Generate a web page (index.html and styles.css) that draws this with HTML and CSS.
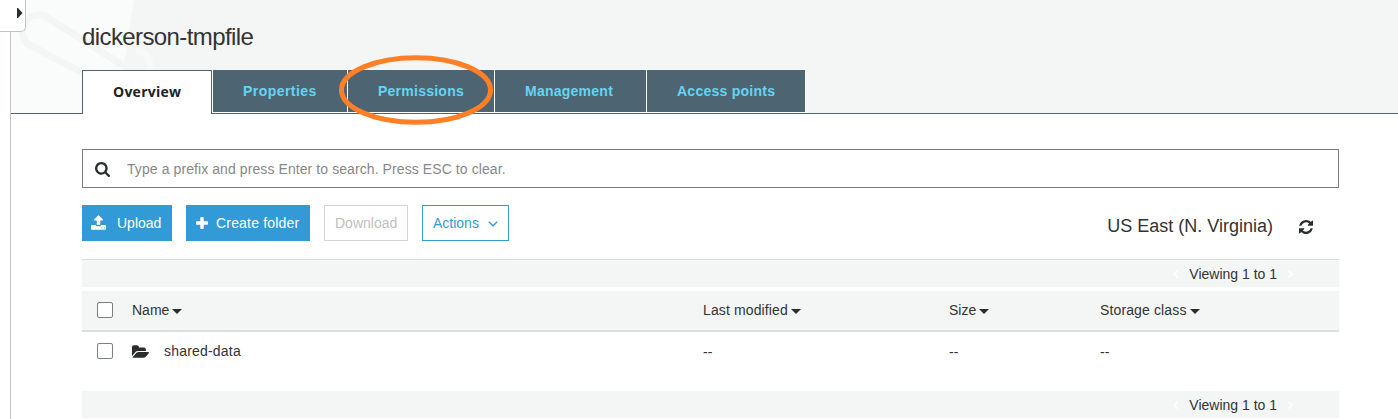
FILE: index.html
```html
<!DOCTYPE html>
<html lang="en">
<head>
<meta charset="utf-8">
<title>dickerson-tmpfile</title>
<link rel="stylesheet" href="styles.css">
</head>
<body>
<div class="app">
  <div class="rail"></div>
  <button class="rail-toggle" aria-label="Open sidebar"><svg width="6" height="10" viewBox="0 0 6 10"><path d="M0 0H1L5.500 5L1 10H0Z"/></svg></button>
  <main class="page">
    <header class="header">
      <svg class="watermark" width="150" height="113" viewBox="0 0 150 113">
        <path class="wm-fill" d="M0 0H123L112 70H71V113H0Z"/>
        <path class="wm-line" d="M76 75L17 44C5 34 13 10 34 16L108 63C120 71 129 64 125 53"/>
        <path class="wm-line" d="M125 52C134 50 141 60 138 70"/>
      </svg>
      <h1 class="title">dickerson-tmpfile</h1>
      <nav class="tabs">
        <a class="tab tab-overview active"><span>Overview</span></a>
        <a class="tab tab-properties"><span>Properties</span></a>
        <a class="tab tab-permissions"><span>Permissions</span>
          <svg class="ring" width="158" height="74" viewBox="0 0 158 74"><ellipse cx="79" cy="37" rx="74.5" ry="32.3"/></svg>
        </a>
        <a class="tab tab-management"><span>Management</span></a>
        <a class="tab tab-access"><span>Access points</span></a>
      </nav>
    </header>
    <section class="content">
      <div class="search">
        <svg width="15" height="15" viewBox="0 128 1664 1664"><path d="M1152 832q0-185-131.500-316.500t-316.500-131.500-316.500 131.500-131.500 316.500 131.500 316.500 316.500 131.500 316.500-131.500 131.500-316.500zm512 832q0 52-38 90t-90 38q-54 0-90-38l-343-342q-179 124-399 124-143 0-273.500-55.500t-225-150-150-225-55.500-273.500 55.500-273.500 150-225 225-150 273.500-55.500 273.500 55.500 225 150 150 225 55.500 273.500q0 220-124 399l343 343q37 37 37 90z"/></svg>
        <span class="placeholder">Type a prefix and press Enter to search. Press ESC to clear.</span>
      </div>
      <div class="toolbar">
        <button class="btn primary upload"><svg width="15" height="15" viewBox="0 64 1664 1600"><path d="M1280 1472q0-26-19-45t-45-19-45 19-19 45 19 45 45 19 45-19 19-45zm256 0q0-26-19-45t-45-19-45 19-19 45 19 45 45 19 45-19 19-45zm128-224v320q0 40-28 68t-68 28h-1472q-40 0-68-28t-28-68v-320q0-40 28-68t68-28h427q21 56 70.500 92t110.500 36h256q61 0 110.500-36t70.500-92h427q40 0 68 28t28 68zm-325-648q-17 40-59 40h-256v448q0 26-19 45t-45 19h-256q-26 0-45-19t-19-45v-448h-256q-42 0-59-40-17-39 14-69l448-448q18-19 45-19t45 19l448 448q31 30 14 69z"/></svg><span>Upload</span></button>
        <button class="btn primary create"><svg width="12" height="12" viewBox="0 0 12 12"><path d="M5 0H7Q7.700 0 7.700 .7V4.300H11.300Q12 4.300 12 5V7Q12 7.700 11.300 7.700H7.700V11.300Q7.700 12 7 12H5Q4.300 12 4.300 11.300V7.700H.7Q0 7.700 0 7V5Q0 4.300 .7 4.300H4.300V.7Q4.300 0 5 0Z"/></svg><span>Create folder</span></button>
        <button class="btn disabled">Download</button>
        <button class="btn outline"><span>Actions</span><svg width="10" height="6" viewBox="0 0 10 6"><path d="M.8 .8L5 4.700L9.200 .8"/></svg></button>
        <div class="region"><span>US East (N. Virginia)</span><svg width="14" height="14" viewBox="0 128 1536 1536"><path d="M1511 1056q0 5-1 7-64 268-268 434.500t-478 166.500q-146 0-282.500-55t-243.500-157l-129 129q-19 19-45 19t-45-19-19-45v-448q0-26 19-45t45-19h448q26 0 45 19t19 45-19 45l-137 137q71 66 161 102t187 36q134 0 250-65t186-179q11-17 53-117 8-23 30-23h192q13 0 22.500 9.500t9.500 22.500zm25-800v448q0 26-19 45t-45 19h-448q-26 0-45-19t-19-45 19-45l138-138q-148-137-349-137-134 0-250 65t-186 179q-11 17-53 117-8 23-30 23h-199q-13 0-22.500-9.500t-9.500-22.500v-7q65-268 270-434.500t480-166.500q146 0 284 55.500t245 156.500l130-129q19-19 45-19t45 19 19 45z"/></svg></div>
      </div>
      <div class="pager top"><svg width="5" height="8" viewBox="0 0 5 8"><path d="M4.500 .5L1 4L4.500 7.500"/></svg><span>Viewing 1 to 1</span><svg width="5" height="8" viewBox="0 0 5 8"><path d="M.5 .5L4 4L.5 7.500"/></svg></div>
      <div class="row head">
        <i class="check"></i>
        <div class="sort"><span>Name</span><i class="caret"></i></div>
        <div class="sort modified"><span>Last modified</span><i class="caret"></i></div>
        <div class="sort"><span>Size</span><i class="caret"></i></div>
        <div class="sort storage"><span>Storage class</span><i class="caret"></i></div>
      </div>
      <div class="row item">
        <i class="check"></i>
        <div class="name"><svg width="17" height="13" viewBox="0 256 1879 1408"><path d="M1879 1080q0 31-31 66l-336 396q-43 51-120.500 86.500t-143.500 35.500h-1088q-34 0-60.500-13t-26.500-43q0-31 31-66l336-396q43-51 120.500-86.500t143.500-35.500h1088q34 0 60.500 13t26.500 43zm-343-344v160h-832q-94 0-197 47.500t-164 119.500l-337 396-5 6q0-4-.5-12.500t-.5-12.500v-960q0-92 66-158t158-66h320q92 0 158 66t66 158v32h544q92 0 158 66t66 158z"/></svg><span>shared-data</span></div>
        <span class="dash">--</span><span class="dash">--</span><span class="dash">--</span>
      </div>
      <div class="pager"><svg width="5" height="8" viewBox="0 0 5 8"><path d="M4.500 .5L1 4L4.500 7.500"/></svg><span>Viewing 1 to 1</span><svg width="5" height="8" viewBox="0 0 5 8"><path d="M.5 .5L4 4L.5 7.500"/></svg></div>
    </section>
  </main>
</div>
</body>
</html>
```
FILE: styles.css
```css
* { box-sizing: border-box; }
body { margin: 0; background: #fff; color: #333; font: 14px/20px "Liberation Sans", Arial, sans-serif; overflow: hidden; }
svg { display: block; flex: none; fill: #2a2d2d; }
.app { display: flex; height: 419px; position: relative; }
.rail { width: 11px; flex: none; border-right: 1px solid #c4c4c4; }
.rail-toggle { position: absolute; left: 0; top: 0; z-index: 2; width: 26px; height: 32px; margin: 0; padding: 8px 0 0 17px; background: #fff; border: solid #c4c4c4; border-width: 0 1px 1px 0; border-radius: 0 0 5px 0; display: flex; }
.page { flex: 1; min-width: 0; }
.header { position: relative; height: 114px; padding: 22px 0 0 71px; background: #f4f6f6; border-bottom: 1px solid #4d6472; }
.watermark { position: absolute; left: 0; top: 0; }
.wm-fill { fill: #fafcfb; }
.wm-line { fill: none; stroke: #f4f6f6; stroke-width: 7; }
.wm-line + .wm-line { stroke: #f7f9f9; }
.title { position: relative; margin: 0; height: 48px; font-size: 24px; line-height: 30px; font-weight: 400; letter-spacing: -0.6px; color: #333; }
.tabs { position: relative; display: flex; width: 723px; height: 44px; gap: 1px; }
.tab { position: relative; height: 42px; padding-left: 30px; background: #4d6472; color: #66d4f1; font-weight: 700; font-size: 14px; line-height: 42px; letter-spacing: .25px; white-space: nowrap; box-shadow: 0 1px #fff, -1px 0 #fff, -1px 1px #fff; }
.tab.active { height: 44px; border: solid #4d6472; border-width: 1px 1px 0; background: #fff; color: #222; font-family: "Open Sans", sans-serif; box-shadow: none; }
.tab.tab-properties { width: 134px; letter-spacing: .45px; }
.tab-overview { width: 130px; }
.tab-permissions { width: 146px; z-index: 1; }
.tab-management { width: 151px; }
.tab-access { width: 158px; }
.ring { position: absolute; left: -11px; top: -17px; overflow: visible; }
.tab-management, .tab-access { z-index: 0; }
.ring ellipse { fill: none; stroke: #ff7f27; stroke-width: 5; }
.content { width: 1328px; padding: 35px 0 0 71px; }
.search { display: flex; align-items: center; height: 39px; padding: 1px 11px 0 12px; gap: 17px; border: 1px solid #7b7b7b; }
.placeholder { color: #888; letter-spacing: .085px; }
.toolbar { display: flex; height: 71px; padding-top: 17px; }
.btn { height: 36px; display: flex; align-items: center; margin: 0 14px 0 0; border: 1px solid; border-radius: 0; font: inherit; padding: 0 10px; background: #fff; white-space: nowrap; }
.primary { background: #329ad6; border-color: #329ad6; color: #fff; }
.primary svg { fill: #fff; }
.upload { width: 90px; padding-left: 8px; gap: 11px; }
.upload svg { margin-top: -1px; }
.create { width: 124px; padding-left: 9px; gap: 8px; letter-spacing: .18px; }
.disabled { width: 84px; color: #c0c0c0; border-color: #d5d5d5; }
.outline { width: 87px; color: #329ad6; border-color: #329ad6; gap: 9px; }
.outline svg { fill: none; stroke: #329ad6; stroke-width: 1.4; margin-top: 1px; }
.region { display: flex; align-items: center; height: 42px; margin-left: auto; padding-right: 26px; gap: 26px; font-size: 18px; }
.region svg { margin-top: 2px; }
.pager { display: flex; align-items: center; justify-content: flex-end; height: 27px; padding-right: 46px; gap: 11px; background: #f4f6f6; }
.pager.top { height: 28px; border-top: 1px solid #ddd; margin-bottom: 4px; }
.pager svg { fill: none; stroke: #fff; stroke-width: 1.5; }
.row { display: grid; grid-template-columns: 50px 571px 246px 151px 1fr; }
.head { height: 41px; padding-bottom: 1px; border-bottom: 2px solid #ddd; background: #f4f6f6; align-items: center; }
.item { height: 59px; padding-top: 9px; align-items: start; }
.check { width: 16px; height: 16px; margin-left: 15px; border: 1px solid #7b8081; border-radius: 2px; background: #fff; }
.item .check { margin-top: 2px; }
.sort { display: flex; align-items: center; gap: 3px; }
.modified { letter-spacing: .12px; }
.storage { letter-spacing: .13px; }
.caret { border: solid transparent; border-width: 5px 5px 0; border-top-color: #2a2d2d; margin-top: 2px; }
.name { display: flex; align-items: center; gap: 15px; letter-spacing: .2px; }
.dash { padding-top: 1px; }
```
